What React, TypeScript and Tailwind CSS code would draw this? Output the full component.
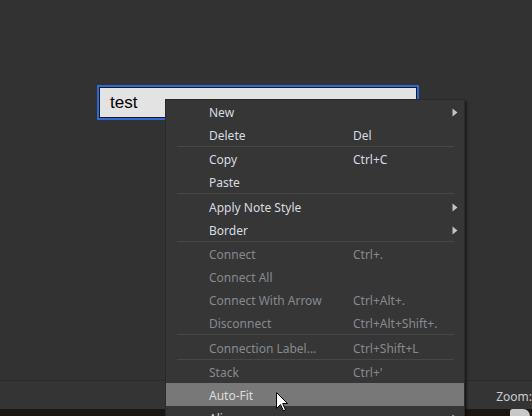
import React from "react";

type Row =
  | { kind: "item"; label: string; shortcut?: string; arrow?: boolean; disabled?: boolean; active?: boolean }
  | { kind: "sep"; h: 1 | 2 };

const rows: Row[] = [
  { kind: "item", label: "New", arrow: true },
  { kind: "item", label: "Delete", shortcut: "Del" },
  { kind: "sep", h: 1 },
  { kind: "item", label: "Copy", shortcut: "Ctrl+C" },
  { kind: "item", label: "Paste" },
  { kind: "sep", h: 2 },
  { kind: "item", label: "Apply Note Style", arrow: true },
  { kind: "item", label: "Border", arrow: true },
  { kind: "sep", h: 1 },
  { kind: "item", label: "Connect", shortcut: "Ctrl+.", disabled: true },
  { kind: "item", label: "Connect All", disabled: true },
  { kind: "item", label: "Connect With Arrow", shortcut: "Ctrl+Alt+.", disabled: true },
  { kind: "item", label: "Disconnect", shortcut: "Ctrl+Alt+Shift+.", disabled: true },
  { kind: "sep", h: 2 },
  { kind: "item", label: "Connection Label...", shortcut: "Ctrl+Shift+L", disabled: true },
  { kind: "sep", h: 1 },
  { kind: "item", label: "Stack", shortcut: "Ctrl+'", disabled: true },
  { kind: "item", label: "Auto-Fit", active: true },
  { kind: "item", label: "Align", arrow: true },
];

function Arrow() {
  return (
    <svg width="6" height="9" viewBox="0 0 6 9" className="block">
      <path d="M0.5 0.5 L5.5 4.5 L0.5 8.5 Z" fill="#c4c4c4" />
    </svg>
  );
}

export default function App() {
  return (
    <div
      className="relative w-[532px] h-[416px] overflow-hidden bg-[#323232] flex flex-col"
      style={{ fontFamily: '"Noto Sans", "Open Sans", sans-serif' }}
    >
      {/* canvas */}
      <div className="h-[380px] pt-[85px] pl-[97px]">
        <div className="w-[322px] h-[35px] border-2 border-[#2f6bd3]">
          <div className="w-full h-full border border-[#141a28] bg-[#e3e3e3] flex items-center pl-[10px]">
            <span
              className="text-[17px] text-black leading-none"
              style={{ fontFamily: '"Liberation Sans", Arial, sans-serif' }}
            >
              test
            </span>
          </div>
        </div>
      </div>
      {/* status bar */}
      <div className="h-px bg-[#292929]" />
      <div className="h-[28px] bg-[#343434] flex">
        <div className="w-[466px] h-full" />
        <div className="w-px h-full bg-[#2a2a2a]" />
        <div className="flex-1 flex items-center pl-[30px] pt-[3px]">
          <span className="text-[12px] text-[#c9ccd0]">Zoom:</span>
        </div>
      </div>
      <div className="flex-1 bg-[#1c1612] flex">
        <div className="w-[510px]" />
        <div className="w-[20px] h-full bg-[#c8c8c8] rounded-tr-[8px] rounded-tl-[3px]" />
      </div>

      {/* context menu */}
      <div className="absolute left-[165px] top-[99px] w-[300px] bg-[#363636] border border-[#2a2a2a] shadow-[2px_2px_2px_rgba(0,0,0,0.45)] text-[12px]">
        {rows.map((r, i) =>
          r.kind === "sep" ? (
            <div key={i} className={r.h === 1 ? "h-px" : "h-[2px]"}>
              <div className="h-px ml-[11px] mr-[10px] bg-[#474747]" />
            </div>
          ) : (
            <div
              key={i}
              className={
                "h-[23px] flex items-center pt-[2px] pl-[43px] pr-[6px] " +
                (r.active ? "bg-[#787878] text-[#dcdcdc]" : r.disabled ? "text-[#868a8e]" : "text-[#d6dbe0]")
              }
            >
              <span className="w-[144px] whitespace-nowrap">{r.label}</span>
              <span className="flex-1 whitespace-nowrap">{r.shortcut ?? ""}</span>
              {r.arrow ? <Arrow /> : null}
            </div>
          )
        )}
      </div>

      {/* mouse cursor */}
      <svg
        className="absolute left-[276px] top-[392px]"
        width="13"
        height="20"
        viewBox="0 0 13 20"
      >
        <path
          d="M0.5 0.5 L0.5 16.5 L4.5 12.5 L7.5 19 L9.5 18 L6.7 11.5 L11.5 11.5 Z"
          fill="#ffffff"
          stroke="#000000"
          strokeWidth="1"
          strokeLinejoin="miter"
        />
      </svg>
    </div>
  );
}
